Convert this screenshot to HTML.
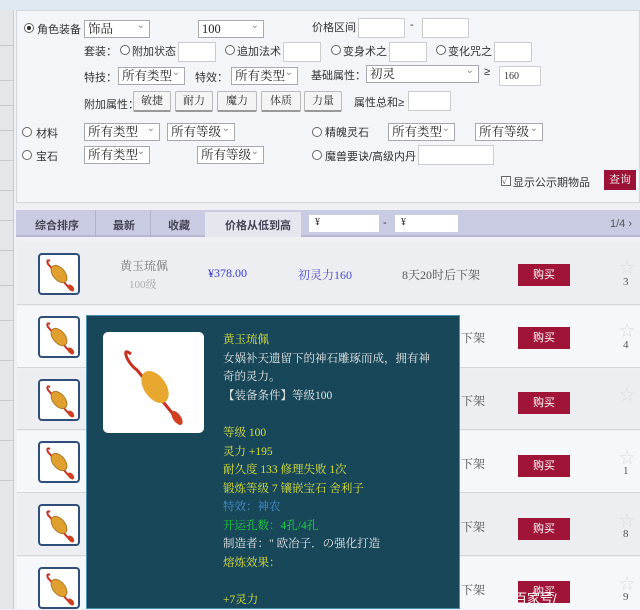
<!DOCTYPE html>
<html><head><meta charset="utf-8"><style>
*{margin:0;padding:0;box-sizing:border-box}
body{width:640px;height:609px;overflow:hidden;background:#eef0f4;font-family:"Liberation Serif","Noto Serif CJK SC",serif;font-size:11px;color:#333;position:relative}
.a{position:absolute}
.sel{position:absolute;height:18px;border:1px solid #a8a8b0;background:#fff;font-size:12.5px;line-height:16px;padding-left:3px;color:#222}
.sel:after{content:"⌄";position:absolute;right:4px;top:-3px;font-size:10px;color:#888}
.inp{position:absolute;height:20px;border:1px solid #ccc;background:#fff}
.rd{position:absolute;width:10px;height:10px;border:1px solid #666;border-radius:50%;background:#fff}
.lb{position:absolute;font-size:11px;color:#333;font-family:"Liberation Sans","Noto Sans CJK SC",sans-serif}
.btn{position:absolute;height:21px;border:1px solid #bbb;border-bottom:2px solid #999;background:#f4f4f4;font-size:11px;text-align:center;line-height:19px;border-radius:2px}
.row{position:absolute;left:17px;width:623px}
.ic{position:absolute;width:42px;height:42px;border:2px solid #2f4f7a;border-radius:4px;background:#fff;overflow:hidden}
.buy{position:absolute;left:518px;width:52px;height:22px;background:#a01438;color:#fff;font-size:11px;text-align:center;line-height:22px;font-family:"Liberation Sans","Noto Sans CJK SC",sans-serif}
.star{position:absolute;left:619px;color:#ddd;font-size:16px}
.num{position:absolute;left:623px;font-size:11px;color:#555}
.tip{position:absolute;left:86px;top:315px;width:374px;height:294px;background:#174759;border:1px solid #4a90b0}
.tt{position:absolute;left:136px;font-size:11.5px;line-height:18.5px;color:#e8e8e8}
.cell{position:absolute;left:0;width:14px;border-bottom:1px solid #c8c8d0}
</style></head><body>
<svg width="0" height="0" style="position:absolute"><defs><g id="pd"><path d="M10 6 q-4 -2 -2 3 L30 34" stroke="#c83020" stroke-width="2" fill="none"/><ellipse cx="19" cy="19" rx="6" ry="10" transform="rotate(-40 19 19)" fill="#e0a030" stroke="#b07820" stroke-width="1"/><ellipse cx="31" cy="33" rx="2.5" ry="4" transform="rotate(-40 31 33)" fill="#d04020"/></g></defs></svg>
<!-- left strip -->
<div class="a" style="left:0;top:0;width:14px;height:609px;background:#e4e6ea;border-right:1px solid #c8c8d0"></div>
<div class="cell" style="top:45px;height:1px"></div><div class="cell" style="top:80px"></div><div class="cell" style="top:105px"></div><div class="cell" style="top:130px"></div><div class="cell" style="top:160px"></div><div class="cell" style="top:190px"></div><div class="cell" style="top:220px"></div><div class="cell" style="top:250px"></div><div class="cell" style="top:285px"></div><div class="cell" style="top:320px"></div><div class="cell" style="top:360px"></div><div class="cell" style="top:400px"></div><div class="cell" style="top:440px"></div><div class="cell" style="top:480px"></div>
<div class="a" style="left:0;top:0;width:640px;height:10px;background:#dfe7f0"></div>
<!-- filter panel -->
<div class="a" style="left:16px;top:10px;width:624px;height:193px;background:#f4f5f8;border:1px solid #d4d6de"></div>
<div class="rd" style="left:24px;top:23px;background:radial-gradient(#333 35%,#fff 40%)"></div>
<div class="lb" style="left:37px;top:21px">角色装备</div>
<div class="sel" style="left:84px;top:20px;width:66px">饰品</div>
<div class="sel" style="left:198px;top:20px;width:66px">100</div>
<div class="lb" style="left:312px;top:19px">价格区间</div>
<div class="inp" style="left:358px;top:18px;width:47px"></div>
<div class="lb" style="left:410px;top:19px">-</div>
<div class="inp" style="left:422px;top:18px;width:47px"></div>
<div class="lb" style="left:84px;top:43px">套装：</div>
<div class="rd" style="left:120px;top:45px"></div><div class="lb" style="left:132px;top:43px">附加状态</div>
<div class="inp" style="left:178px;top:42px;width:38px"></div>
<div class="rd" style="left:225px;top:45px"></div><div class="lb" style="left:237px;top:43px">追加法术</div>
<div class="inp" style="left:283px;top:42px;width:38px"></div>
<div class="rd" style="left:331px;top:45px"></div><div class="lb" style="left:343px;top:43px">变身术之</div>
<div class="inp" style="left:389px;top:42px;width:38px"></div>
<div class="rd" style="left:436px;top:45px"></div><div class="lb" style="left:448px;top:43px">变化咒之</div>
<div class="inp" style="left:494px;top:42px;width:38px"></div>
<div class="lb" style="left:84px;top:69px">特技：</div>
<div class="sel" style="left:118px;top:67px;width:67px">所有类型</div>
<div class="lb" style="left:195px;top:69px">特效：</div>
<div class="sel" style="left:231px;top:67px;width:67px">所有类型</div>
<div class="lb" style="left:311px;top:67px">基础属性：</div>
<div class="sel" style="left:366px;top:65px;width:113px">初灵</div>
<div class="lb" style="left:484px;top:66px">≥</div>
<div class="inp" style="left:499px;top:66px;width:42px;font-size:10px;padding:4px">160</div>
<div class="lb" style="left:84px;top:96px">附加属性：</div>
<div class="btn" style="left:133px;top:91px;width:38px">敏捷</div>
<div class="btn" style="left:175px;top:91px;width:38px">耐力</div>
<div class="btn" style="left:217px;top:91px;width:40px">魔力</div>
<div class="btn" style="left:261px;top:91px;width:40px">体质</div>
<div class="btn" style="left:304px;top:91px;width:38px">力量</div>
<div class="lb" style="left:354px;top:94px">属性总和≥</div>
<div class="inp" style="left:408px;top:91px;width:43px"></div>
<div class="rd" style="left:22px;top:127px"></div><div class="lb" style="left:36px;top:125px">材料</div>
<div class="sel" style="left:84px;top:123px;width:76px">所有类型</div>
<div class="sel" style="left:167px;top:123px;width:68px">所有等级</div>
<div class="rd" style="left:312px;top:127px"></div><div class="lb" style="left:325px;top:124px">精魄灵石</div>
<div class="sel" style="left:388px;top:123px;width:67px">所有类型</div>
<div class="sel" style="left:475px;top:123px;width:68px">所有等级</div>
<div class="rd" style="left:22px;top:150px"></div><div class="lb" style="left:36px;top:148px">宝石</div>
<div class="sel" style="left:84px;top:146px;width:66px">所有类型</div>
<div class="sel" style="left:197px;top:146px;width:67px">所有等级</div>
<div class="rd" style="left:312px;top:150px"></div><div class="lb" style="left:325px;top:148px">魔兽要诀/高级内丹</div>
<div class="inp" style="left:418px;top:145px;width:76px"></div>
<div class="a" style="left:501px;top:176px;width:10px;height:10px;border:1px solid #666;background:#fff;font-size:9px;line-height:8px">✓</div>
<div class="lb" style="left:513px;top:174px">显示公示期物品</div>
<div class="a" style="left:604px;top:170px;width:32px;height:20px;background:#9c1236;color:#fff;font-size:11px;text-align:center;line-height:20px">查询</div>
<!-- tab bar -->
<div class="a" style="left:16px;top:210px;width:624px;height:27px;background:#c9cbe2;border-bottom:2px solid #b6b8d4"></div>
<div class="a" style="left:95px;top:210px;width:1px;height:27px;background:#b0b2cc"></div>
<div class="a" style="left:150px;top:210px;width:1px;height:27px;background:#b0b2cc"></div>
<div class="a" style="left:205px;top:212px;width:96px;height:25px;background:#e5e6ee"></div>
<div class="lb" style="left:35px;top:217px;font-weight:bold;color:#445">综合排序</div>
<div class="lb" style="left:113px;top:217px;font-weight:bold;color:#445">最新</div>
<div class="lb" style="left:168px;top:217px;font-weight:bold;color:#445">收藏</div>
<div class="lb" style="left:225px;top:217px;font-weight:bold;color:#445">价格从低到高</div>
<div class="a" style="left:309px;top:215px;width:70px;height:17px;background:#fff;font-size:10px;padding:2px 6px">¥</div>
<div class="lb" style="left:383px;top:217px">-</div>
<div class="a" style="left:395px;top:215px;width:63px;height:17px;background:#fff;font-size:10px;padding:2px 6px">¥</div>
<div class="lb" style="left:610px;top:218px;color:#555">1/4 ›</div>
<!-- rows -->
<div class="row" style="top:243px;height:62px;background:#eceef2;border-bottom:1px solid #d4d6dc"></div>
<div class="row" style="top:306px;height:62px;background:#f6f7fa;border-bottom:1px solid #d4d6dc"></div>
<div class="row" style="top:369px;height:61px;background:#eceef2;border-bottom:1px solid #d4d6dc"></div>
<div class="row" style="top:431px;height:62px;background:#f6f7fa;border-bottom:1px solid #d4d6dc"></div>
<div class="row" style="top:494px;height:62px;background:#eceef2;border-bottom:1px solid #d4d6dc"></div>
<div class="row" style="top:557px;height:52px;background:#f6f7fa"></div>
<div class="ic" style="left:38px;top:253px"><svg width="38" height="38"><use href="#pd"/></svg></div>
<div class="ic" style="left:38px;top:316px"><svg width="38" height="38"><use href="#pd"/></svg></div>
<div class="ic" style="left:38px;top:379px"><svg width="38" height="38"><use href="#pd"/></svg></div>
<div class="ic" style="left:38px;top:441px"><svg width="38" height="38"><use href="#pd"/></svg></div>
<div class="ic" style="left:38px;top:504px"><svg width="38" height="38"><use href="#pd"/></svg></div>
<div class="ic" style="left:38px;top:567px"><svg width="38" height="38"><use href="#pd"/></svg></div>
<div class="a" style="left:120px;top:257px;font-size:12px;color:#777">黄玉琉佩</div>
<div class="a" style="left:129px;top:276px;font-size:11px;color:#aaa">100级</div>
<div class="a" style="left:208px;top:266px;font-size:12px;color:#3a3ad0">¥378.00</div>
<div class="a" style="left:298px;top:266px;font-size:12px;color:#5050c8">初灵力160</div>
<div class="a" style="left:402px;top:266px;font-size:12px;color:#555">8天20时后下架</div>
<div class="a" style="left:461px;top:329px;font-size:12px;color:#555">下架</div>
<div class="a" style="left:461px;top:392px;font-size:12px;color:#555">下架</div>
<div class="a" style="left:461px;top:455px;font-size:12px;color:#555">下架</div>
<div class="a" style="left:461px;top:518px;font-size:12px;color:#555">下架</div>
<div class="a" style="left:461px;top:581px;font-size:12px;color:#555">下架</div>
<div class="buy" style="top:264px">购买</div>
<div class="buy" style="top:327px">购买</div>
<div class="buy" style="top:392px">购买</div>
<div class="buy" style="top:455px">购买</div>
<div class="buy" style="top:518px">购买</div>
<div class="buy" style="top:581px">购买</div>
<div class="star" style="top:255px">☆</div><div class="num" style="top:276px">3</div>
<div class="star" style="top:318px">☆</div><div class="num" style="top:339px">4</div>
<div class="star" style="top:382px">☆</div>
<div class="star" style="top:445px">☆</div><div class="num" style="top:465px">1</div>
<div class="star" style="top:508px">☆</div><div class="num" style="top:528px">8</div>
<div class="star" style="top:571px">☆</div><div class="num" style="top:591px">9</div>
<!-- tooltip -->
<div class="tip">
<div class="a" style="left:16px;top:16px;width:101px;height:101px;background:#fff;border-radius:5px">
<svg width="101" height="101"><path d="M28 22 q-8 -6 -4 4 q4 8 10 12 L70 82" stroke="#c83020" stroke-width="3" fill="none"/><ellipse cx="52" cy="55" rx="11" ry="18" transform="rotate(-35 52 55)" fill="#e8a830"/><ellipse cx="74" cy="86" rx="4" ry="8" transform="rotate(-35 74 86)" fill="#d04020"/></svg></div>
<div class="tt" style="top:15px;color:#d8e040">黄玉琉佩</div>
<div class="tt" style="top:34px">女娲补天遗留下的神石雕琢而成，拥有神</div>
<div class="tt" style="top:52px">奇的灵力。</div>
<div class="tt" style="top:71px">【装备条件】等级100</div>
<div class="tt" style="top:108px;color:#d8e040">等级 100</div>
<div class="tt" style="top:127px;color:#d8e040">灵力 +195</div>
<div class="tt" style="top:145px;color:#d8e040">耐久度 133 修理失败 1次</div>
<div class="tt" style="top:164px;color:#d8e040">锻炼等级 7 镶嵌宝石 舍利子</div>
<div class="tt" style="top:182px;color:#4a90d0">特效：神农</div>
<div class="tt" style="top:201px;color:#20d040">开运孔数：4孔/4孔</div>
<div class="tt" style="top:219px">制造者：" 欧冶子．の强化打造</div>
<div class="tt" style="top:238px;color:#d8e040">熔炼效果：</div>
<div class="tt" style="top:275px;color:#d8e040">+7灵力</div>
</div>
<div class="a" style="left:514px;top:588px;font-size:13px;color:#fff;font-family:'Liberation Sans','Noto Sans CJK SC',sans-serif">百家号/</div>
</body></html>
